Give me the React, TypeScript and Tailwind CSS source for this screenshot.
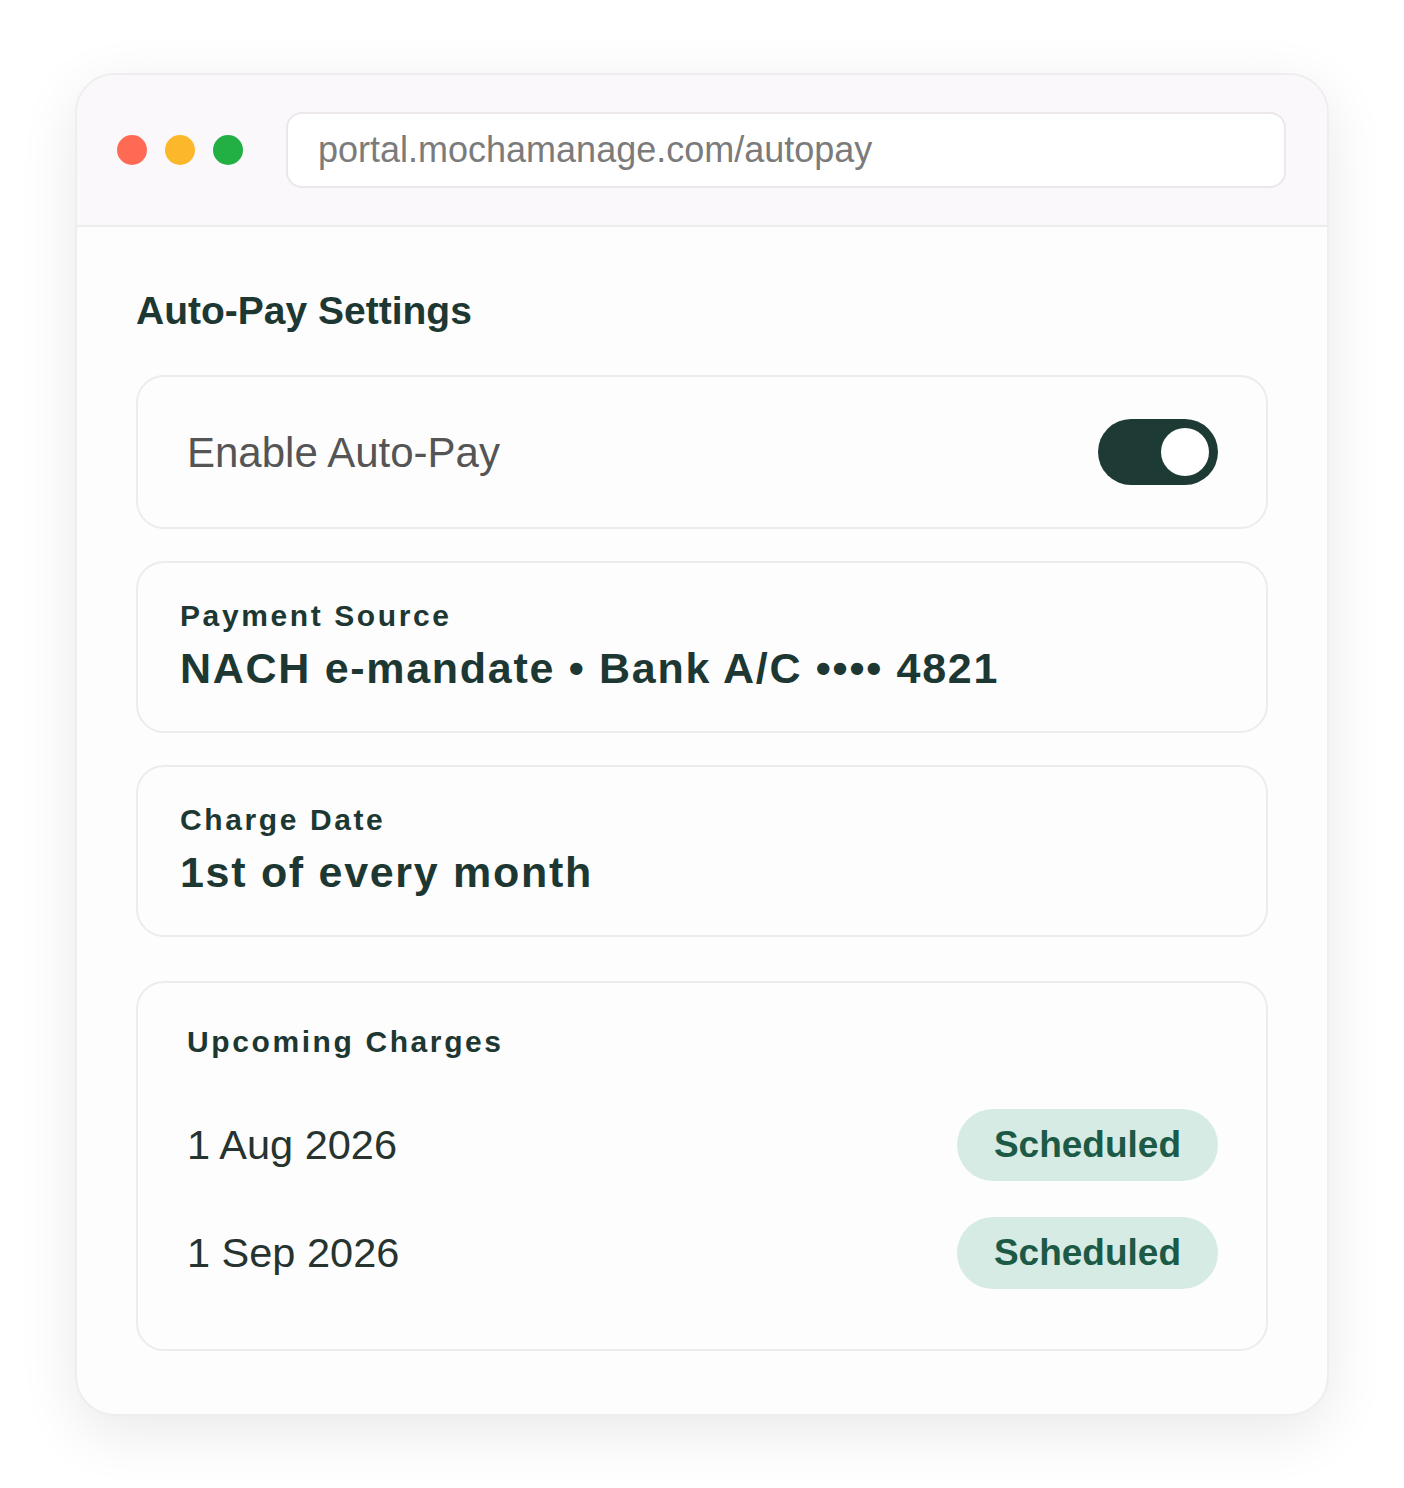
import React from 'react';

const font = { fontFamily: '"Liberation Sans", Arial, sans-serif' };

function Pill() {
  return (
    <span className="flex h-[72px] w-[261px] items-center justify-center rounded-full bg-[#d5ebe3] text-[37px] font-bold text-[#1c5a46]">
      Scheduled
    </span>
  );
}

function InfoCard({ label, value }: { label: string; value: string }) {
  return (
    <div className="flex h-[172px] flex-col rounded-[28px] border-2 border-[#eeebee] bg-[#fdfdfd] pl-[42px] pt-[36px]">
      <div className="text-[30px] font-bold leading-[34px] tracking-[2.6px] text-[#1d3833]">{label}</div>
      <div className="mt-[10px] text-[43px] font-bold leading-[50px] tracking-[1.7px] text-[#1d3833]">{value}</div>
    </div>
  );
}

export default function App() {
  return (
    <div className="min-h-[1488px] bg-white pl-[75px] pt-[73px]" style={font}>
      <div className="w-[1254px] overflow-hidden rounded-[40px] border-2 border-[#efedef] bg-[#fdfdfd] shadow-[0_16px_60px_rgba(0,0,0,0.09)]">
        {/* title bar */}
        <div className="flex h-[152px] items-center border-b-2 border-[#eeebee] bg-[#faf8fa] pl-[40px] pr-[41px]">
          <div className="flex gap-[18px]">
            <span className="h-[30px] w-[30px] rounded-full bg-[#ff6a55]" />
            <span className="h-[30px] w-[30px] rounded-full bg-[#fdb72a]" />
            <span className="h-[30px] w-[30px] rounded-full bg-[#22b045]" />
          </div>
          <div className="ml-[43px] flex h-[76px] flex-1 items-center rounded-[16px] border-2 border-[#ebe7eb] bg-white pl-[30px] text-[36px] text-[#7b7b7b]">
            portal.mochamanage.com/autopay
          </div>
        </div>

        {/* content */}
        <div className="px-[59px] pb-[63px] pt-[64px]">
          <h1 className="text-[39px] font-bold leading-[40px] text-[#1d3833]">Auto-Pay Settings</h1>

          <div className="mt-[44px] flex h-[154px] items-center justify-between rounded-[28px] border-2 border-[#eeebee] bg-[#fdfdfd] pl-[49px] pr-[48px]">
            <span className="text-[42px] text-[#555555]">Enable Auto-Pay</span>
            <span className="flex h-[66px] w-[120px] items-center justify-end rounded-full bg-[#1e3a34] pr-[9px]">
              <span className="h-[48px] w-[48px] rounded-full bg-white" />
            </span>
          </div>

          <div className="mt-[32px] flex flex-col gap-[32px]">
            <InfoCard label="Payment Source" value="NACH e-mandate • Bank A/C •••• 4821" />
            <InfoCard label="Charge Date" value="1st of every month" />
          </div>

          <div className="mt-[44px] rounded-[28px] border-2 border-[#eeebee] bg-[#fdfdfd] pb-[60px] pl-[49px] pr-[48px] pt-[42px]">
            <div className="text-[30px] font-bold leading-[34px] tracking-[2.6px] text-[#1d3833]">Upcoming Charges</div>
            <div className="mt-[50px] flex flex-col gap-[36px]">
              <div className="flex items-center justify-between">
                <span className="text-[41.5px] text-[#26332f]">1 Aug 2026</span>
                <Pill />
              </div>
              <div className="flex items-center justify-between">
                <span className="text-[41.5px] text-[#26332f]">1 Sep 2026</span>
                <Pill />
              </div>
            </div>
          </div>
        </div>
      </div>
    </div>
  );
}
